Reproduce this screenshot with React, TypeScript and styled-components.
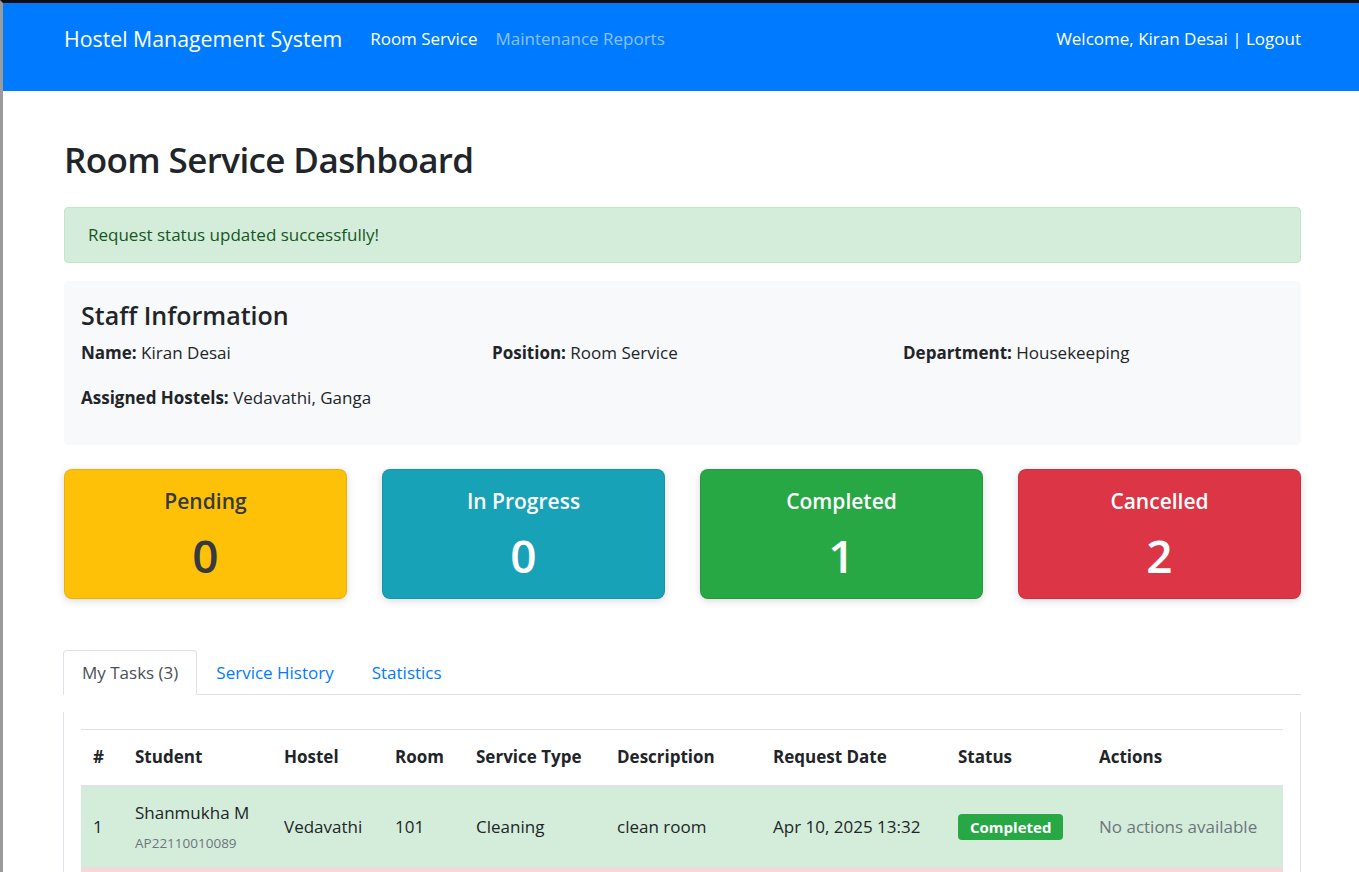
import React from "react";
import styled, { createGlobalStyle } from "styled-components";

const Global = createGlobalStyle`
  html, body { margin: 0; padding: 0; background: #fff; }
  body {
    font-family: "Open Sans", "Noto Sans", "Liberation Sans", sans-serif;
    font-size: 17px;
    line-height: 24px;
    color: #212529;
  }
  * { box-sizing: border-box; }
`;

const Frame = styled.div`
  border-top: 3px solid #0d0f12;
  border-left: 3px solid #9b9b9b;
  min-height: 869px;
`;

const Navbar = styled.nav`
  height: 88px;
  background: #007bff;
  display: flex;
  align-items: flex-start;
  padding: 21px 58px 0 61px;
`;

const Brand = styled.a`
  font-size: 21.3px;
  line-height: 30px;
  color: #fff;
  text-decoration: none;
  margin-right: 19px;
`;

const NavLink = styled.a<{ $active?: boolean }>`
  font-size: 17px;
  line-height: 30px;
  padding: 0 9px;
  color: ${(p) => (p.$active ? "#fff" : "rgba(255,255,255,0.55)")};
  text-decoration: none;
`;

const NavRight = styled.div`
  margin-left: auto;
  font-size: 17px;
  line-height: 30px;
  color: #fff;
`;

const Main = styled.main`
  padding: 0 58px 0 61px;
`;

const Title = styled.h1`
  font-size: 35px;
  font-weight: 600;
  letter-spacing: -0.6px;
  line-height: 48px;
  margin: 45px 0 23px;
`;

const Alert = styled.div`
  background: #d4edda;
  border: 1px solid #c3e6cb;
  color: #155724;
  border-radius: 4px;
  padding: 15px 23px;
  height: 56px;
  margin-bottom: 18px;
`;

const InfoCard = styled.section`
  background: #f8f9fa;
  border-radius: 5px;
  padding: 20px 17px 19px;
  margin-bottom: 24px;
`;

const InfoTitle = styled.h4`
  font-size: 25px;
  font-weight: 600;
  line-height: 29px;
  margin: 0 0 11px;
`;

const InfoGrid = styled.div`
  display: grid;
  grid-template-columns: repeat(3, 1fr);
  column-gap: 30px;
  row-gap: 21px;
`;

const InfoItem = styled.p`
  margin: 0;
  line-height: 24px;
  strong { font-weight: 700; }
`;

const InfoSpacer = styled.div`
  height: 16px;
`;

const StatGrid = styled.div`
  display: grid;
  grid-template-columns: repeat(4, 1fr);
  column-gap: 35px;
  margin-bottom: 51px;
`;

const StatCard = styled.div<{ $bg: string; $fg: string }>`
  height: 130px;
  border-radius: 8px;
  background: ${(p) => p.$bg};
  color: ${(p) => p.$fg};
  border: 1px solid rgba(0, 0, 0, 0.08);
  box-shadow: 0 2px 8px rgba(0, 0, 0, 0.15);
  text-align: center;
  padding-top: 18px;
`;

const StatLabel = styled.div`
  font-size: 21px;
  font-weight: 600;
  line-height: 26px;
`;

const StatValue = styled.div`
  font-size: 46px;
  font-weight: 600;
  line-height: 56px;
  margin-top: 13px;
`;

const Tabs = styled.div`
  display: flex;
  border-bottom: 1px solid #dee2e6;
  margin-left: -1px;
`;

const Tab = styled.a<{ $active?: boolean }>`
  display: block;
  padding: 10px 18px 9px;
  line-height: 24px;
  font-size: 17px;
  margin-bottom: -1px;
  border: 1px solid transparent;
  border-color: ${(p) => (p.$active ? "#dee2e6 #dee2e6 #fff" : "transparent")};
  border-top-left-radius: 4px;
  border-top-right-radius: 4px;
  background: ${(p) => (p.$active ? "#fff" : "transparent")};
  color: ${(p) => (p.$active ? "#495057" : "#007bff")};
  text-decoration: none;
`;

const Panel = styled.div`
  margin-top: 17px;
  margin-left: -1px;
  border-left: 1px solid #dee2e6;
  border-right: 1px solid #dee2e6;
  padding: 17px 17px 0;
`;

const Table = styled.table`
  width: 100%;
  table-layout: fixed;
  border-collapse: collapse;
  border-top: 1px solid #dee2e6;
`;

const Th = styled.th`
  text-align: left;
  font-weight: 700;
  height: 56px;
  padding: 0 12px;
  vertical-align: middle;
  border-bottom: 2px solid #dee2e6;
  white-space: nowrap;
`;

const Row = styled.tr<{ $tone: "success" | "danger" }>`
  background: ${(p) => (p.$tone === "success" ? "#d4edda" : "#f8d7da")};
`;

const Td = styled.td`
  height: 82px;
  padding: 0 12px;
  vertical-align: middle;
  border-top: 1px solid #dee2e6;
  white-space: nowrap;
`;

const StudentName = styled.div`
  line-height: 24px;
`;

const StudentId = styled.small`
  display: block;
  font-size: 13.5px;
  line-height: 20px;
  margin-top: 8px;
  color: #6c757d;
`;

const Badge = styled.span`
  display: inline-block;
  background: #28a745;
  color: #fff;
  font-weight: 700;
  font-size: 15px;
  line-height: 18px;
  padding: 4px 12px;
  border-radius: 4px;
`;

const Muted = styled.span`
  color: #6c757d;
`;

const stats = [
  { label: "Pending", value: 0, bg: "#ffc107", fg: "#343a40" },
  { label: "In Progress", value: 0, bg: "#17a2b8", fg: "#fff" },
  { label: "Completed", value: 1, bg: "#28a745", fg: "#fff" },
  { label: "Cancelled", value: 2, bg: "#dc3545", fg: "#fff" },
];

const cols = [42, 149, 111, 81, 141, 156, 185, 141, 196];
const heads = ["#", "Student", "Hostel", "Room", "Service Type", "Description", "Request Date", "Status", "Actions"];

export default function App() {
  return (
    <Frame>
      <Global />
      <Navbar>
        <Brand href="#">Hostel Management System</Brand>
        <NavLink $active href="#">Room Service</NavLink>
        <NavLink href="#">Maintenance Reports</NavLink>
        <NavRight>Welcome, Kiran Desai | Logout</NavRight>
      </Navbar>
      <Main>
        <Title>Room Service Dashboard</Title>
        <Alert>Request status updated successfully!</Alert>
        <InfoCard>
          <InfoTitle>Staff Information</InfoTitle>
          <InfoGrid>
            <InfoItem><strong>Name:</strong> Kiran Desai</InfoItem>
            <InfoItem><strong>Position:</strong> Room Service</InfoItem>
            <InfoItem><strong>Department:</strong> Housekeeping</InfoItem>
            <InfoItem><strong>Assigned Hostels:</strong> Vedavathi, Ganga</InfoItem>
          </InfoGrid>
          <InfoSpacer />
        </InfoCard>
        <StatGrid>
          {stats.map((s) => (
            <StatCard key={s.label} $bg={s.bg} $fg={s.fg}>
              <StatLabel>{s.label}</StatLabel>
              <StatValue>{s.value}</StatValue>
            </StatCard>
          ))}
        </StatGrid>
        <Tabs>
          <Tab $active href="#">My Tasks (3)</Tab>
          <Tab href="#">Service History</Tab>
          <Tab href="#">Statistics</Tab>
        </Tabs>
        <Panel>
          <Table>
            <colgroup>
              {cols.map((w, i) => (
                <col key={i} width={w} />
              ))}
            </colgroup>
            <thead>
              <tr>
                {heads.map((h) => (
                  <Th key={h}>{h}</Th>
                ))}
              </tr>
            </thead>
            <tbody>
              <Row $tone="success">
                <Td>1</Td>
                <Td>
                  <StudentName>Shanmukha M</StudentName>
                  <StudentId>AP22110010089</StudentId>
                </Td>
                <Td>Vedavathi</Td>
                <Td>101</Td>
                <Td>Cleaning</Td>
                <Td>clean room</Td>
                <Td>Apr 10, 2025 13:32</Td>
                <Td><Badge>Completed</Badge></Td>
                <Td><Muted>No actions available</Muted></Td>
              </Row>
              <Row $tone="danger">
                <Td>2</Td>
                <Td>
                  <StudentName>Shanmukha M</StudentName>
                  <StudentId>AP22110010089</StudentId>
                </Td>
                <Td>Vedavathi</Td>
                <Td>102</Td>
                <Td>Cleaning</Td>
                <Td>clean room</Td>
                <Td>Apr 10, 2025 13:30</Td>
                <Td><Badge>Cancelled</Badge></Td>
                <Td><Muted>No actions available</Muted></Td>
              </Row>
            </tbody>
          </Table>
        </Panel>
      </Main>
    </Frame>
  );
}
